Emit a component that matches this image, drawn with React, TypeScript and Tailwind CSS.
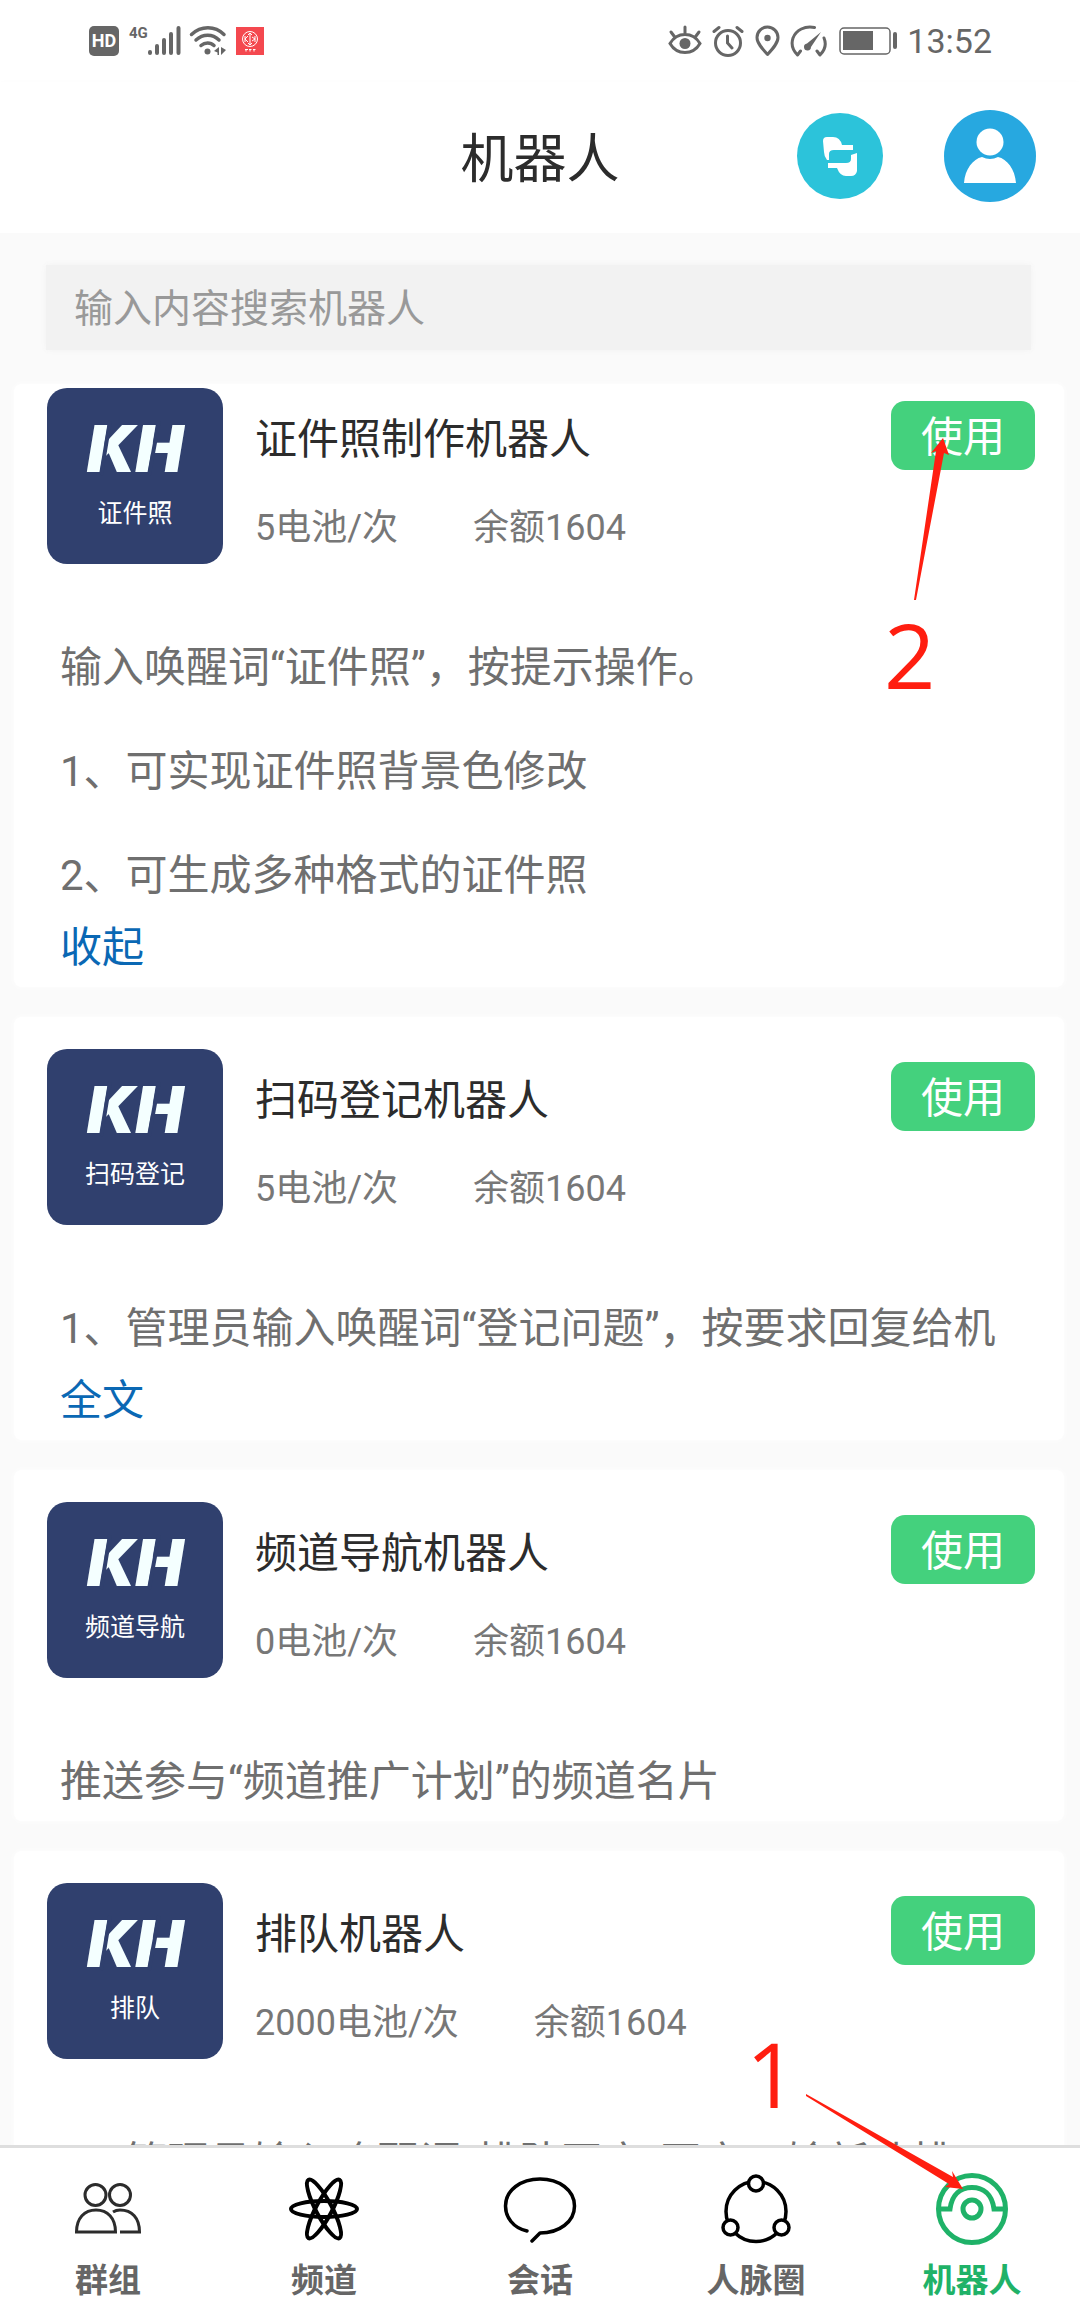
import React, { useState } from 'react';
import { clsx } from 'clsx';

type Bot = {
  name: string;
  label: string;
  price: string;
  balance: string;
  lines: string[];
  toggle?: string;
};

const bots: Bot[] = [
  {
    name: '证件照制作机器人',
    label: '证件照',
    price: '5电池/次',
    balance: '余额1604',
    lines: ['输入唤醒词“证件照”，按提示操作。', '1、可实现证件照背景色修改', '2、可生成多种格式的证件照'],
    toggle: '收起',
  },
  {
    name: '扫码登记机器人',
    label: '扫码登记',
    price: '5电池/次',
    balance: '余额1604',
    lines: ['1、管理员输入唤醒词“登记问题”，按要求回复给机'],
    toggle: '全文',
  },
  {
    name: '频道导航机器人',
    label: '频道导航',
    price: '0电池/次',
    balance: '余额1604',
    lines: ['推送参与“频道推广计划”的频道名片'],
  },
  {
    name: '排队机器人',
    label: '排队',
    price: '2000电池/次',
    balance: '余额1604',
    lines: ['1、管理员输入唤醒词“排队开启”开启，输新功排'],
  },
];

const StatusBar: React.FC = () => (
  <div className="flex h-[82px] shrink-0 items-center justify-between pl-[89px] pr-[88px] text-[#666]">
    <div className="flex items-center">
      <span className="flex h-[30px] w-[30px] items-center justify-center rounded-[5px] bg-[#666] text-[18px] font-bold leading-none text-white">HD</span>
      <span className="ml-[10px] self-start text-[15px] font-bold leading-[15px]">4G</span>
      <svg width="33" height="30" viewBox="0 0 33 30" fill="none" stroke="currentColor" strokeWidth="4" strokeLinecap="round">
        <path d="M2 26v1M9 20v7M16 14v13M23 8v19M30.500 2v25" />
      </svg>
      <svg className="ml-2" width="38" height="30" viewBox="0 0 38 30" fill="none" stroke="currentColor" strokeWidth="3.500" strokeLinecap="round">
        <path d="M2.500 8.500C12-.5 26-.5 35 8.500M7 14c7-6.500 16.500-6.500 23 0M12 19.500c4-3.500 9.500-3.500 13 0" />
        <circle cx="18.500" cy="25.500" r="3" fill="currentColor" stroke="none" />
        <path d="M30 21v8h-1.500v-2.500L25 25zM32 21v8l5-5z" fill="currentColor" stroke="none" />
      </svg>
      <svg className="ml-[9px]" width="28" height="28" viewBox="0 0 28 28" fill="none">
        <path fill="#f4484f" d="M0 0h28v28H0z" />
        <g stroke="#fff" strokeWidth="1">
          <circle cx="14" cy="12" r="7.500" />
          <path d="M9 9v6M9 12l3-3M9 12l3 3M19 9v6M16 10l3 2-3 2M14 6v12M12 8l2-2 2 2M12 16l2 2 2-2" />
          <path d="M9 22.500h3M13 22.500h2.500M17 22.500h2.500M10 22v2.500M14 22v2.500M18 22v2.500" />
        </g>
      </svg>
    </div>
    <div className="flex items-center">
      <svg width="34" height="32" viewBox="0 0 34 32" fill="none" stroke="currentColor" strokeWidth="3" strokeLinecap="round">
        <path d="M2 18.500c7-12 23-12 30 0-7 12-23 12-30 0zM17 2v6M3 7l3 4M31 7l-3 4" />
        <circle cx="17" cy="18.500" r="5.500" fill="currentColor" stroke="none" />
      </svg>
      <svg className="ml-[10px]" width="32" height="32" viewBox="0 0 32 32" fill="none" stroke="currentColor" strokeWidth="3" strokeLinecap="round">
        <circle cx="16" cy="18" r="12.500" />
        <path d="M15.500 11v7l4.500 5M2 6.500l5-4M30 6.500l-5-4" />
      </svg>
      <svg className="ml-[11px]" width="25" height="32" viewBox="0 0 25 32" fill="none" stroke="currentColor" strokeWidth="3" strokeLinejoin="round">
        <path d="M12.500 29.500C7 23.500 2 18 2 12.500a10.500 10.500 0 0 1 21 0c0 5.500-5 11-10.500 17z" />
        <circle cx="12.500" cy="13" r="3.200" fill="currentColor" stroke="none" />
      </svg>
      <svg className="ml-[10px]" width="38" height="33" viewBox="0 0 38 33" fill="none" stroke="currentColor" strokeWidth="3" strokeLinecap="round" strokeLinejoin="round">
        <path d="M24.500 2.500C15 .5 6 5 3 13c-2 6-.5 12 4.500 17l3-4M34 13c2.500 6 1 12-4 17l-3-4" />
        <path d="M31 7 21 22a3.500 3.500 0 1 1-4-3.500z" fill="currentColor" stroke="none" />
      </svg>
      <svg className="ml-[11px]" width="59" height="28" viewBox="0 0 59 28" fill="none">
        <rect x="1" y="1" width="50" height="26" rx="4" stroke="currentColor" strokeWidth="1.500" />
        <path fill="currentColor" d="M4 4h30v19H4z" />
        <rect x="54" y="5" width="4" height="17" rx="2" fill="currentColor" />
      </svg>
      <span className="ml-[9px] text-[34px] leading-none">13:52</span>
    </div>
  </div>
);

const TopBar: React.FC = () => (
  <header className="grid h-[151px] shrink-0 grid-cols-[1fr_auto_1fr] items-center bg-white pb-1 shadow-[0_2px_8px_#fafafa]">
    <h1 className="col-start-2 pt-2.5 text-[53px] leading-none text-[#2c2c2c]">机器人</h1>
    <div className="flex items-center justify-end gap-[61px] pr-[44px]">
      <button type="button" aria-label="切换" className="h-[86px] w-[86px] rounded-full bg-[#2cc3da]">
        <svg width="86" height="86" viewBox="0 0 86 86" fill="#fff">
          <path d="M26 28q0-4 4-4h6q7 0 9 8h11v5H37q-5 0-5 4v6l-2 0q-3-4-3-8z" />
          <path d="M60 40v18q-1 5-6 5h-5q-6 0-9-8h-9v-5h18q5 0 5-4v-4z" />
        </svg>
      </button>
      <button type="button" aria-label="我的" className="h-[92px] w-[92px] rounded-full bg-[#27a8e0]">
        <svg width="92" height="92" viewBox="0 0 92 92" fill="#fff">
          <circle cx="46" cy="32" r="13.500" />
          <path d="M20 73c1-14 9-24 18-26q8 4 16 0c9 2 17 12 18 26z" />
        </svg>
      </button>
    </div>
  </header>
);

const BotTile: React.FC<{ label: string }> = ({ label }) => (
  <div className="flex h-[176px] w-[176px] shrink-0 flex-col items-center rounded-[20px] bg-[#30406e] pt-[17px] text-white">
    <svg width="176" height="90" viewBox="0 0 176 90">
      <text x="88" y="67" textAnchor="middle" fill="#f4ffff" className="font-['Inter'] text-[64px] font-black italic">KH</text>
      <path d="M63 16 54 70M112 16l-10 54" stroke="#30406e" strokeWidth="4" />
    </svg>
    <span className="text-[25px] leading-[38px]">{label}</span>
  </div>
);

const BotCard: React.FC<{ bot: Bot; first: boolean }> = ({ bot, first }) => (
  <article className={clsx('rounded-lg bg-white pb-[3px] pl-[33px] pr-[29px] shadow-[0_0_6px_#fff]', first ? 'pt-1' : 'pt-8')}>
    <div className="flex items-start">
      <BotTile label={bot.label} />
      <div className="ml-8 flex flex-1 flex-col gap-7 pt-[22px]">
        <h2 className="text-[42px] leading-[60px] text-[#2c2c2c]">{bot.name}</h2>
        <p className="flex gap-[75px] text-[36px] leading-[60px] text-[#777]">
          <span>{bot.price}</span>
          <span>{bot.balance}</span>
        </p>
      </div>
      <button type="button" className="mt-[13px] h-[69px] w-[144px] rounded-[14px] bg-[#44d17d] pt-1 text-[42px] leading-none text-white">使用</button>
    </div>
    <div className="ml-[13px] mt-[68px] flex flex-col gap-8 text-[42px] leading-[72px] text-[#6f6f6f]">
      {bot.lines.map((line) => (
        <p key={line} className="overflow-hidden whitespace-nowrap">{line}</p>
      ))}
    </div>
    {bot.toggle && (
      <button type="button" className="ml-[13px] block text-[42px] leading-[72px] text-[#0a68b4]">{bot.toggle}</button>
    )}
  </article>
);

const tabs = [
  {
    name: '群组',
    icon: (
      <g stroke="#2c2c2c" strokeWidth="3">
        <circle cx="25.500" cy="24" r="10.500" />
        <circle cx="50" cy="24" r="10.500" />
        <path d="M6.500 61c0-14 8-22 19.500-22s19.500 8 19.500 22zM43 41c2-1.300 4.500-2 7-2 12 0 19.500 8 19.500 22H50" />
      </g>
    ),
  },
  {
    name: '频道',
    icon: (
      <g strokeWidth="4">
        <ellipse cx="38" cy="38" rx="33" ry="8" />
        <ellipse cx="38" cy="38" rx="33" ry="8" transform="rotate(62 38 38)" />
        <ellipse cx="38" cy="38" rx="33" ry="8" transform="rotate(-62 38 38)" />
      </g>
    ),
  },
  {
    name: '会话',
    icon: (
      <path strokeWidth="3.500" strokeLinecap="round" strokeLinejoin="round" d="M25 60C11 57 3.500 46 3.500 35 3.500 19 19 8 38 8s34.500 11 34.500 27S57 62 38 62l-8 8" />
    ),
  },
  {
    name: '人脉圈',
    icon: (
      <g strokeWidth="3.500">
        <ellipse cx="38" cy="40.500" rx="30" ry="30" />
        <circle cx="38" cy="12.500" r="7.500" fill="#fff" />
        <circle cx="12.500" cy="56.500" r="7.500" fill="#fff" />
        <circle cx="63.500" cy="56.500" r="7.500" fill="#fff" />
      </g>
    ),
  },
  {
    name: '机器人',
    icon: (
      <g stroke="#1fb268" strokeWidth="5">
        <circle cx="38" cy="38" r="33.500" />
        <circle cx="38" cy="38" r="9" />
        <path d="M5 38h11C18 23 27 16.500 38 16.500S58 23 60 38h11" />
      </g>
    ),
  },
];

const TabBar: React.FC<{ active: string; onChange: (name: string) => void }> = ({ active, onChange }) => (
  <nav className="relative grid shrink-0 grid-cols-5 border-t-[3px] border-[#dedede] bg-white pb-[11px] pt-[23px]">
    {tabs.map((tab) => (
      <button
        key={tab.name}
        type="button"
        onClick={() => onChange(tab.name)}
        className={clsx('flex flex-col items-center gap-[14px]', active === tab.name ? 'text-[#1fb268]' : 'text-[#666]')}
      >
        <svg width="76" height="76" viewBox="0 0 76 76" fill="none" stroke="#000">
          {tab.icon}
        </svg>
        <span className="text-[33px] font-bold leading-[40px]">{tab.name}</span>
      </button>
    ))}
    {/* Step 1: open the bot tab */}
    <div className="pointer-events-none absolute -top-[106px] right-[110px] flex w-[224px] text-[#ff1e10]">
      <span className="font-['Open_Sans'] text-[90px] leading-[62px]">1</span>
      <svg className="absolute right-0 top-0" width="170" height="160" viewBox="0 0 170 160" fill="currentColor">
        <path d="m6 52 147 83-1-6 11 18-18-2 4-3L6 54z" />
      </svg>
    </div>
  </nav>
);

export default function App() {
  const [active, setActive] = useState('机器人');

  return (
    <div className="flex h-screen flex-col overflow-hidden bg-white font-['Roboto','Noto_Sans_CJK_SC',sans-serif]">
      <StatusBar />
      <TopBar />
      <main className="min-h-0 flex-1 overflow-hidden bg-[#fafafa] pl-[14px] pr-4">
        <div className="pb-[34px] pl-8 pr-[33px] pt-8">
          <input
            type="search"
            aria-label="搜索机器人"
            placeholder="输入内容搜索机器人"
            className="block h-[85px] w-full bg-[#f2f2f2] px-7 pt-0.5 text-[39px] text-[#333] shadow-[0_0_6px_#f2f2f2] outline-none placeholder:text-[#999]"
          />
        </div>
        <div className="relative flex flex-col gap-[30px]">
          {bots.map((bot, i) => (
            <BotCard key={bot.name} bot={bot} first={i === 0} />
          ))}
          {/* Step 2: start the bot */}
          <div className="pointer-events-none absolute right-[110px] top-[54px] flex w-[70px] flex-col text-[#ff1e10]">
            <svg width="70" height="164" viewBox="0 0 70 164" fill="currentColor">
              <path d="m59 0 6 17-5-2-28 147h-2L52 13l-5 2z" />
            </svg>
            <span className="font-['Open_Sans'] text-[90px] leading-[104px]">2</span>
          </div>
        </div>
      </main>
      <TabBar active={active} onChange={setActive} />
    </div>
  );
}
